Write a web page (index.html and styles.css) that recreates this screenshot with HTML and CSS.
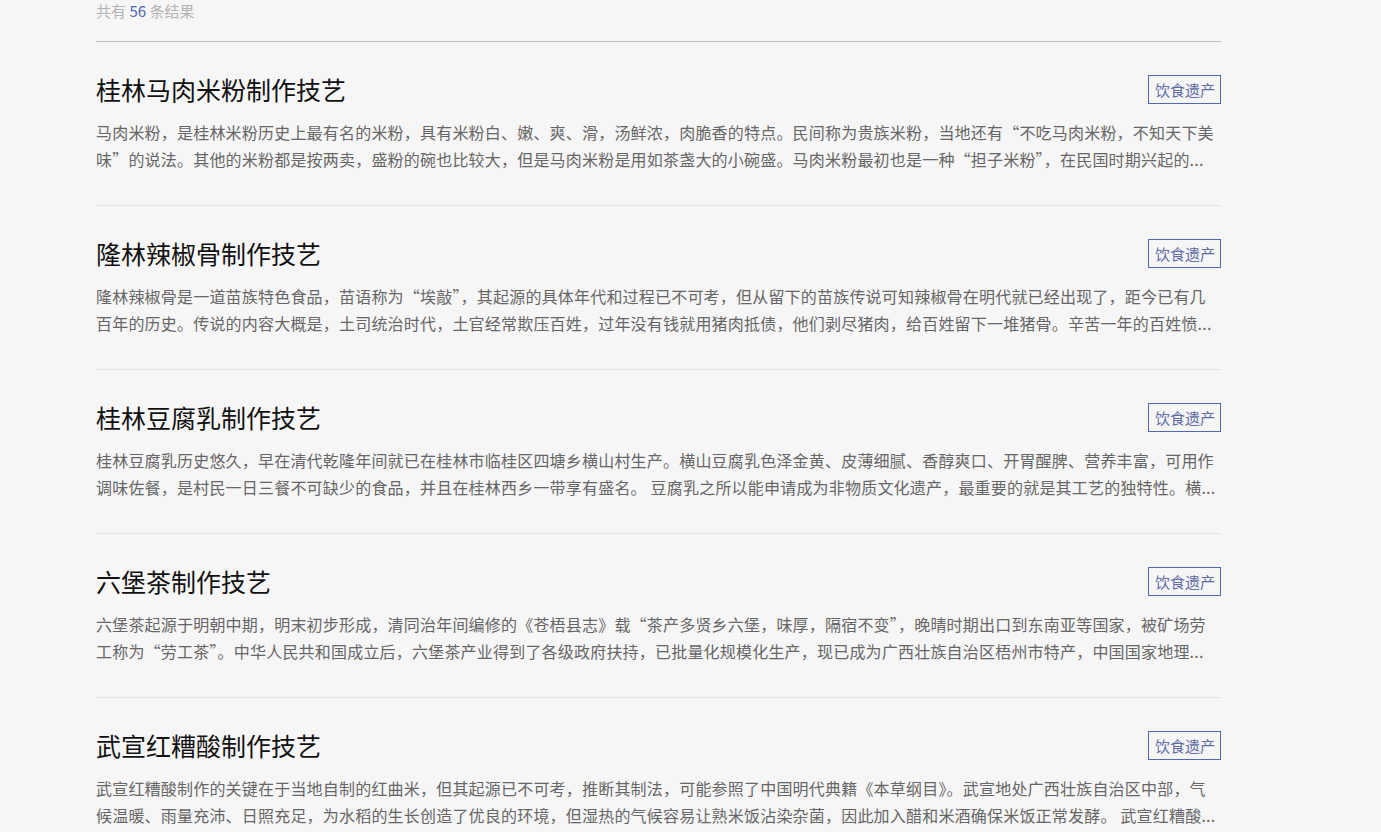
FILE: index.html
```html
<!DOCTYPE html>
<html lang="zh-CN">
<head>
    <meta charset="UTF-8">
    <meta name="viewport" content="width=device-width, initial-scale=1.0">
    <title>搜索结果</title>
    <link rel="stylesheet" href="styles.css">
</head>
<body>
    <div class="result-wrap">
        <div class="result-count">共有 <span class="num">56</span> 条结果</div>

        <ul class="result-list">
            <li class="result-item">
                <div class="item-head">
                    <h2 class="item-title">桂林马肉米粉制作技艺</h2>
                    <span class="tag">饮食遗产</span>
                </div>
                <p class="item-desc">马肉米粉，是桂林米粉历史上最有名的米粉，具有米粉白、嫩、爽、滑，汤鲜浓，肉脆香的特点。民间称为贵族米粉，当地还有“不吃马肉米粉，不知天下美味”的说法。其他的米粉都是按两卖，盛粉的碗也比较大，但是马肉米粉是用如茶盏大的小碗盛。马肉米粉最初也是一种“担子米粉”，在民国时期兴起的...</p>
            </li>
            <li class="result-item">
                <div class="item-head">
                    <h2 class="item-title">隆林辣椒骨制作技艺</h2>
                    <span class="tag">饮食遗产</span>
                </div>
                <p class="item-desc">隆林辣椒骨是一道苗族特色食品，苗语称为“埃敲”，其起源的具体年代和过程已不可考，但从留下的苗族传说可知辣椒骨在明代就已经出现了，距今已有几百年的历史。传说的内容大概是，土司统治时代，土官经常欺压百姓，过年没有钱就用猪肉抵债，他们剥尽猪肉，给百姓留下一堆猪骨。辛苦一年的百姓愤...</p>
            </li>
            <li class="result-item">
                <div class="item-head">
                    <h2 class="item-title">桂林豆腐乳制作技艺</h2>
                    <span class="tag">饮食遗产</span>
                </div>
                <p class="item-desc">桂林豆腐乳历史悠久，早在清代乾隆年间就已在桂林市临桂区四塘乡横山村生产。横山豆腐乳色泽金黄、皮薄细腻、香醇爽口、开胃醒脾、营养丰富，可用作调味佐餐，是村民一日三餐不可缺少的食品，并且在桂林西乡一带享有盛名。 豆腐乳之所以能申请成为非物质文化遗产，最重要的就是其工艺的独特性。横...</p>
            </li>
            <li class="result-item">
                <div class="item-head">
                    <h2 class="item-title">六堡茶制作技艺</h2>
                    <span class="tag">饮食遗产</span>
                </div>
                <p class="item-desc">六堡茶起源于明朝中期，明末初步形成，清同治年间编修的《苍梧县志》载“茶产多贤乡六堡，味厚，隔宿不变”，晚晴时期出口到东南亚等国家，被矿场劳工称为“劳工茶”。中华人民共和国成立后，六堡茶产业得到了各级政府扶持，已批量化规模化生产，现已成为广西壮族自治区梧州市特产，中国国家地理...</p>
            </li>
            <li class="result-item">
                <div class="item-head">
                    <h2 class="item-title">武宣红糟酸制作技艺</h2>
                    <span class="tag">饮食遗产</span>
                </div>
                <p class="item-desc">武宣红糟酸制作的关键在于当地自制的红曲米，但其起源已不可考，推断其制法，可能参照了中国明代典籍《本草纲目》。武宣地处广西壮族自治区中部，气候温暖、雨量充沛、日照充足，为水稻的生长创造了优良的环境，但湿热的气候容易让熟米饭沾染杂菌，因此加入醋和米酒确保米饭正常发酵。 武宣红糟酸...</p>
            </li>
        </ul>
    </div>
</body>
</html>
```

FILE: styles.css
```css
* {
    margin: 0;
    padding: 0;
    box-sizing: border-box;
}

body {
    font-family: "Noto Sans CJK SC", "Noto Sans", sans-serif;
    background: #f6f6f6;
    color: #333;
}

.result-wrap {
    width: 1125px;
    margin-left: 96px;
    padding-top: 1px;
}

.result-count {
    font-size: 15px;
    line-height: 20px;
    color: #b2b2b2;
    padding-bottom: 20px;
    border-bottom: 1px solid #c2c2c2;
}

.result-count .num {
    color: #4d63b3;
}

.result-list {
    list-style: none;
}

.result-item {
    padding: 30px 0 32px;
    border-bottom: 1px solid #e4e4e4;
}

.item-head {
    display: flex;
    align-items: center;
    justify-content: space-between;
}

.item-title {
    font-size: 25px;
    font-weight: normal;
    line-height: 34px;
    color: #111;
}

.tag {
    font-size: 15px;
    line-height: 21px;
    padding: 3px 5px 3px 6px;
    border: 1px solid #5068b8;
    color: #5e6ca6;
}

/* 摘要固定两行 */
.item-desc {
    margin-top: 13px;
    font-size: 16px;
    line-height: 27px;
    letter-spacing: 0.2px;
    color: #666;
    max-height: 54px;
    overflow: hidden;
}
```
